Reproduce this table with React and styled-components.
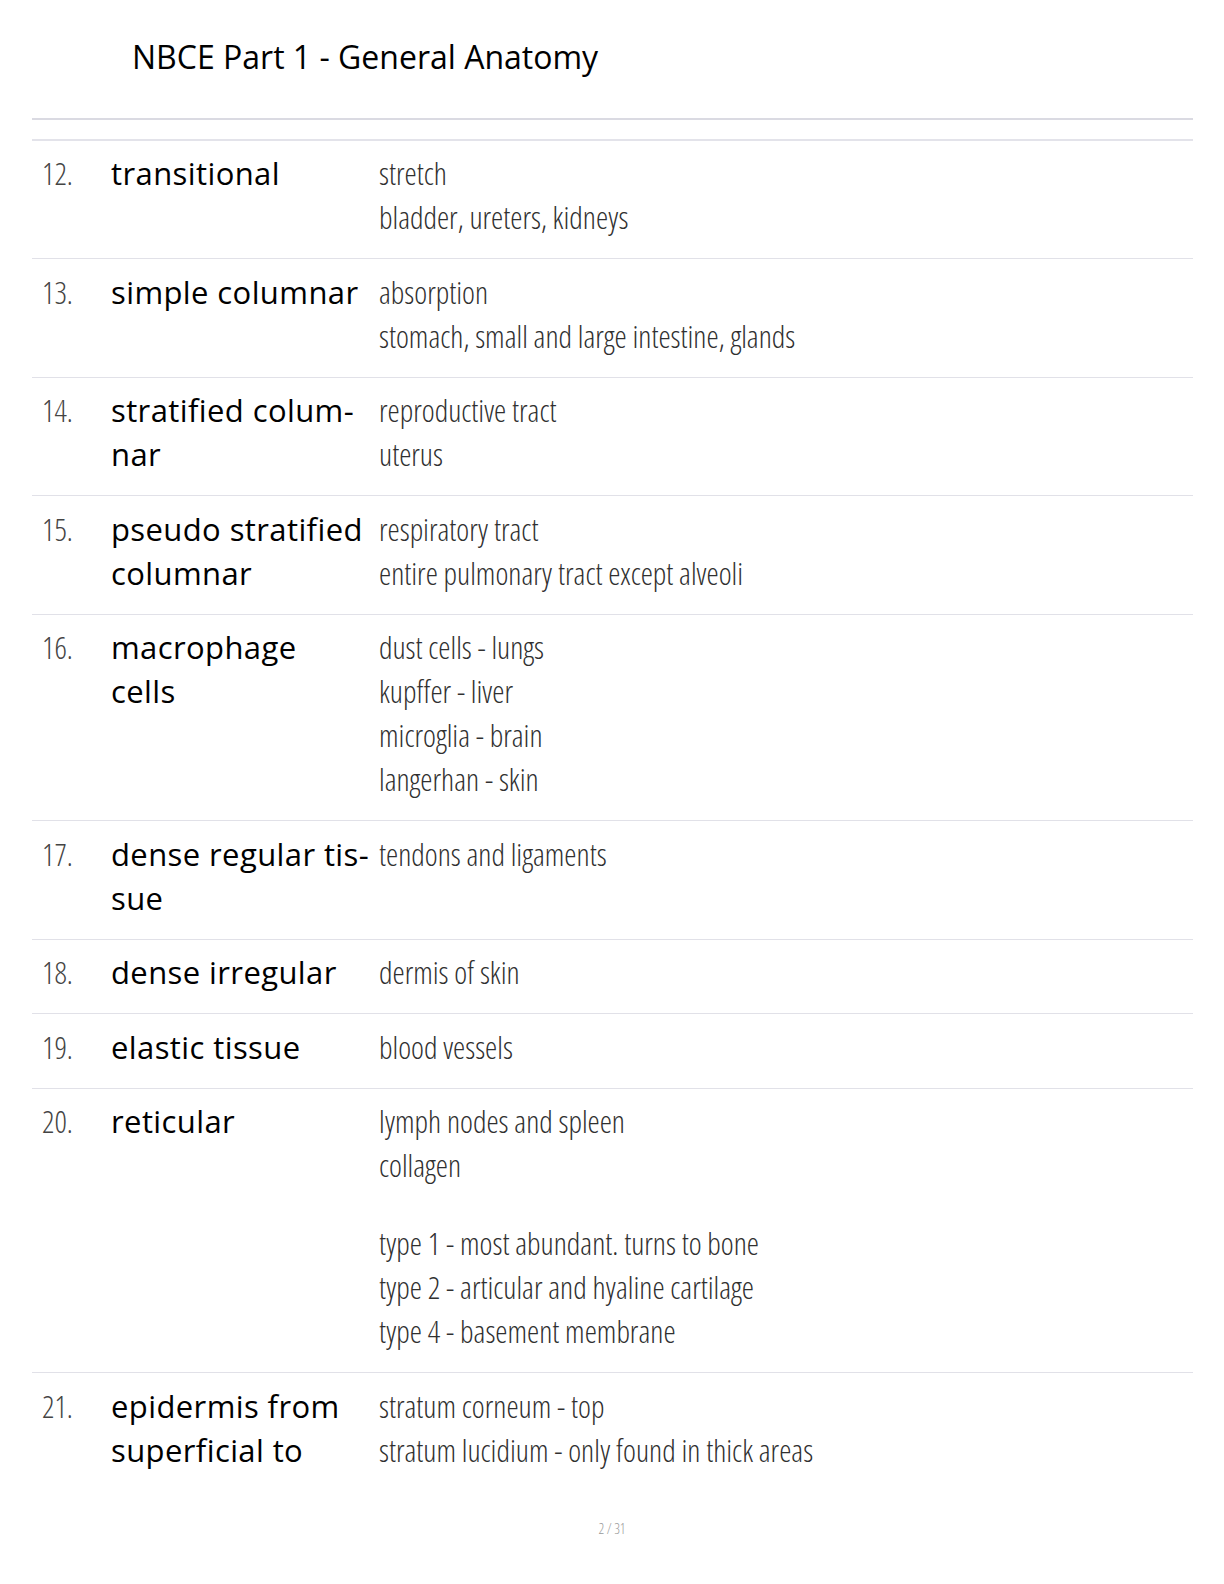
import React from "react";
import styled, { createGlobalStyle } from "styled-components";

const Global = createGlobalStyle`
  html, body { margin: 0; padding: 0; background: #fff; }
  body { font-family: "Open Sans", "Noto Sans", sans-serif; color: #000; }
`;

const Page = styled.div`
  width: 1224px;
  height: 1584px;
  overflow: hidden;
  display: flex;
  flex-direction: column;
`;

const Header = styled.header`
  padding: 38px 0 0 132px;
  height: 118px;
  box-sizing: border-box;
`;

const Title = styled.h1`
  margin: 0;
  font-family: "Open Sans", sans-serif;
  font-weight: 400;
  font-size: 32px;
  line-height: 38px;
  color: #000;
`;

const Rule = styled.hr`
  margin: 0 31px 0 32px;
  border: none;
  height: ${(p) => p.$h}px;
  background: ${(p) => p.$c};
`;

const Spacer = styled.div`
  height: ${(p) => p.$h}px;
`;

const List = styled.div`
  margin: 0 31px 0 32px;
  display: flex;
  flex-direction: column;
`;

const Row = styled.div`
  display: grid;
  grid-template-columns: 79px 268px 1fr;
  padding: 10.5px 0 19px 0;
  border-bottom: ${(p) => (p.$last ? "none" : "1.5px solid #e1e1e8")};
`;

const Num = styled.div`
  padding-left: 10px;
  font-family: "Open Sans", sans-serif;
  font-stretch: 75%;
  font-weight: 300;
  font-size: 30.5px;
  line-height: 44px;
  color: #444;
`;

const Term = styled.div`
  font-family: "Open Sans", sans-serif;
  font-weight: 500;
  font-size: 31px;
  letter-spacing: 0.4px;
  line-height: 44px;
  color: #000;
  width: 264px;
  hyphens: manual;
  white-space: pre-line;
`;

const Defs = styled.div`
  display: flex;
  flex-direction: column;
`;

const Line = styled.div`
  font-family: "Open Sans", sans-serif;
  font-stretch: 75%;
  font-weight: 300;
  font-size: 30.8px;
  line-height: 44px;
  color: #303030;
  white-space: nowrap;
`;

const Gap = styled.div`
  height: 34px;
`;

const Footer = styled.div`
  margin-top: auto;
  padding-bottom: 46px;
  text-align: center;
  font-family: "Open Sans", sans-serif;
  font-stretch: 75%;
  font-weight: 300;
  font-size: 14px;
  color: #999;
`;

const rows = [
  { n: "12.", t: "transitional", d: ["stretch", "bladder, ureters, kidneys"] },
  { n: "13.", t: "simple columnar", d: ["absorption", "stomach, small and large intestine, glands"] },
  { n: "14.", t: "stratified colum\u00ADnar", d: ["reproductive tract", "uterus"] },
  { n: "15.", t: "pseudo stratified columnar", d: ["respiratory tract", "entire pulmonary tract except alveoli"] },
  { n: "16.", t: "macrophage\ncells", d: ["dust cells - lungs", "kupffer - liver", "microglia - brain", "langerhan - skin"] },
  { n: "17.", t: "dense regular tis\u00ADsue", d: ["tendons and ligaments"] },
  { n: "18.", t: "dense irregular", d: ["dermis of skin"] },
  { n: "19.", t: "elastic tissue", d: ["blood vessels"] },
  { n: "20.", t: "reticular", d: ["lymph nodes and spleen", "collagen", null, "type 1 - most abundant. turns to bone", "type 2 - articular and hyaline cartilage", "type 4 - basement membrane"] },
  { n: "21.", t: "epidermis from superficial to", d: ["stratum corneum - top", "stratum lucidium - only found in thick areas"] },
];

export default function App() {
  return (
    <>
      <Global />
      <Page>
        <Header>
          <Title>NBCE Part 1 - General Anatomy</Title>
        </Header>
        <Rule $h={2} $c="#dadae2" />
        <Spacer $h={19} />
        <Rule $h={1.5} $c="#e3e3ea" />
        <List>
          {rows.map((r, i) => (
            <Row key={r.n} $last={i === rows.length - 1}>
              <Num>{r.n}</Num>
              <Term>{r.t}</Term>
              <Defs>
                {r.d.map((l, j) => (l === null ? <Gap key={j} /> : <Line key={j}>{l}</Line>))}
              </Defs>
            </Row>
          ))}
        </List>
        <Footer>2 / 31</Footer>
      </Page>
    </>
  );
}
